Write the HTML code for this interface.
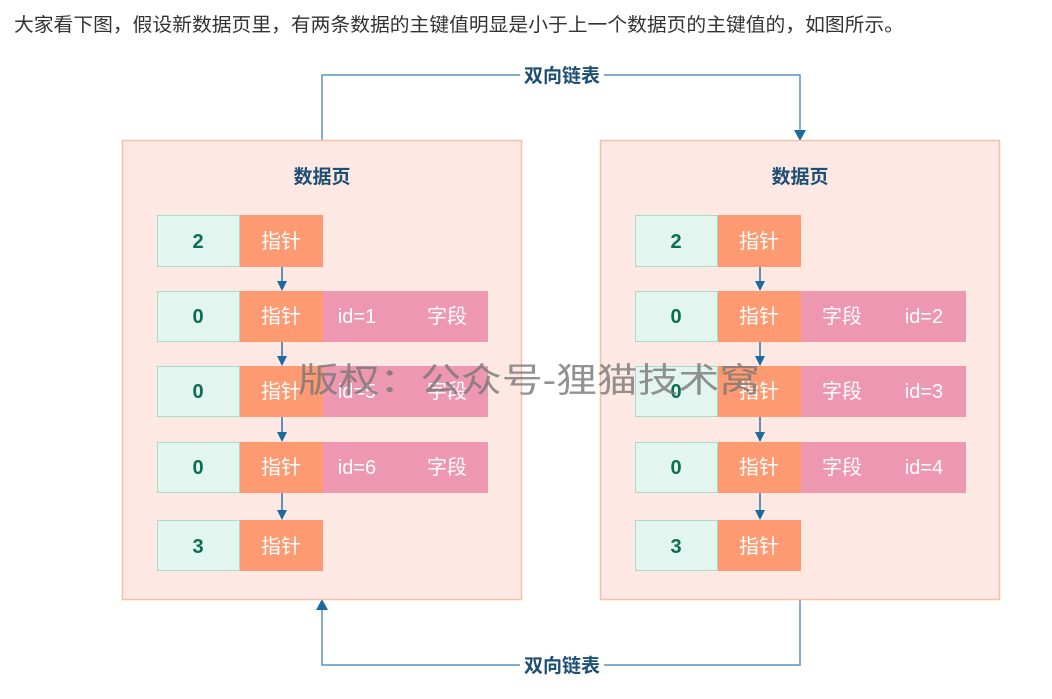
<!DOCTYPE html>
<html><head><meta charset="utf-8"><style>
html,body{margin:0;padding:0;background:#fff;width:1052px;height:699px;overflow:hidden}
svg{position:absolute;left:0;top:0}
text{font-family:"Liberation Sans","Noto Sans CJK SC",sans-serif}
</style></head><body>
<svg width="1052" height="699" viewBox="0 0 1052 699" xmlns="http://www.w3.org/2000/svg">
<text x="14" y="31" font-size="19" fill="#333" textLength="890" lengthAdjust="spacingAndGlyphs">大家看下图，假设新数据页里，有两条数据的主键值明显是小于上一个数据页的主键值的，如图所示。</text>
<g fill="none" stroke="#5b93b5" stroke-width="1.5">
<path d="M322 140 V75 H800 V132"/>
<path d="M800 600 V665 H322 V608"/>
</g>
<path d="M794 130 L800 141 L806 130Z" fill="#1d6a9e"/>
<path d="M316 610 L322 599 L328 610Z" fill="#1d6a9e"/>
<rect x="520" y="63" width="84" height="24" fill="#fff"/>
<rect x="520" y="653" width="84" height="24" fill="#fff"/>
<text x="562" y="82" font-size="19" font-weight="bold" fill="#1d4f73" text-anchor="middle">双向链表</text>
<text x="562" y="672" font-size="19" font-weight="bold" fill="#1d4f73" text-anchor="middle">双向链表</text>
<rect x="122.5" y="140.5" width="399" height="459" fill="#fde8e3" stroke="#f5c0a8" stroke-width="1.5"/>
<rect x="600.5" y="140.5" width="399" height="459" fill="#fde8e3" stroke="#f5c0a8" stroke-width="1.5"/>
<text x="322" y="183" font-size="19" font-weight="bold" fill="#1d4f73" text-anchor="middle">数据页</text>
<text x="800" y="183" font-size="19" font-weight="bold" fill="#1d4f73" text-anchor="middle">数据页</text>
<g font-size="20" text-anchor="middle">
<g>
<rect x="157.5" y="215.5" width="82" height="51" fill="#e3f5ef" stroke="#a8dcc8"/><rect x="240" y="215" width="83" height="52" fill="#fd9a72"/>
<text x="198" y="248" fill="#0b6e52" font-weight="bold">2</text><text x="281" y="248" fill="#fff">指针</text>
<rect x="157.5" y="291.5" width="82" height="50" fill="#e3f5ef" stroke="#a8dcc8"/><rect x="240" y="291" width="83" height="51" fill="#fd9a72"/><rect x="323" y="291" width="165" height="51" fill="#ee97b0"/>
<text x="198" y="323" fill="#0b6e52" font-weight="bold">0</text><text x="281" y="323" fill="#fff">指针</text><text x="357" y="323" fill="#fff">id=1</text><text x="447" y="323" fill="#fff">字段</text>
<rect x="157.5" y="366.5" width="82" height="50" fill="#e3f5ef" stroke="#a8dcc8"/><rect x="240" y="366" width="83" height="51" fill="#fd9a72"/><rect x="323" y="366" width="165" height="51" fill="#ee97b0"/>
<text x="198" y="398" fill="#0b6e52" font-weight="bold">0</text><text x="281" y="398" fill="#fff">指针</text><text x="357" y="398" fill="#fff">id=5</text><text x="447" y="398" fill="#fff">字段</text>
<rect x="157.5" y="442.5" width="82" height="50" fill="#e3f5ef" stroke="#a8dcc8"/><rect x="240" y="442" width="83" height="51" fill="#fd9a72"/><rect x="323" y="442" width="165" height="51" fill="#ee97b0"/>
<text x="198" y="474" fill="#0b6e52" font-weight="bold">0</text><text x="281" y="474" fill="#fff">指针</text><text x="357" y="474" fill="#fff">id=6</text><text x="447" y="474" fill="#fff">字段</text>
<rect x="157.5" y="520.5" width="82" height="50" fill="#e3f5ef" stroke="#a8dcc8"/><rect x="240" y="520" width="83" height="51" fill="#fd9a72"/>
<text x="198" y="553" fill="#0b6e52" font-weight="bold">3</text><text x="281" y="553" fill="#fff">指针</text>
</g>
<g>
<rect x="635.5" y="215.5" width="82" height="51" fill="#e3f5ef" stroke="#a8dcc8"/><rect x="718" y="215" width="83" height="52" fill="#fd9a72"/>
<text x="676" y="248" fill="#0b6e52" font-weight="bold">2</text><text x="759" y="248" fill="#fff">指针</text>
<rect x="635.5" y="291.5" width="82" height="50" fill="#e3f5ef" stroke="#a8dcc8"/><rect x="718" y="291" width="83" height="51" fill="#fd9a72"/><rect x="801" y="291" width="165" height="51" fill="#ee97b0"/>
<text x="676" y="323" fill="#0b6e52" font-weight="bold">0</text><text x="759" y="323" fill="#fff">指针</text><text x="842" y="323" fill="#fff">字段</text><text x="924" y="323" fill="#fff">id=2</text>
<rect x="635.5" y="366.5" width="82" height="50" fill="#e3f5ef" stroke="#a8dcc8"/><rect x="718" y="366" width="83" height="51" fill="#fd9a72"/><rect x="801" y="366" width="165" height="51" fill="#ee97b0"/>
<text x="676" y="398" fill="#0b6e52" font-weight="bold">0</text><text x="759" y="398" fill="#fff">指针</text><text x="842" y="398" fill="#fff">字段</text><text x="924" y="398" fill="#fff">id=3</text>
<rect x="635.5" y="442.5" width="82" height="50" fill="#e3f5ef" stroke="#a8dcc8"/><rect x="718" y="442" width="83" height="51" fill="#fd9a72"/><rect x="801" y="442" width="165" height="51" fill="#ee97b0"/>
<text x="676" y="474" fill="#0b6e52" font-weight="bold">0</text><text x="759" y="474" fill="#fff">指针</text><text x="842" y="474" fill="#fff">字段</text><text x="924" y="474" fill="#fff">id=4</text>
<rect x="635.5" y="520.5" width="82" height="50" fill="#e3f5ef" stroke="#a8dcc8"/><rect x="718" y="520" width="83" height="51" fill="#fd9a72"/>
<text x="676" y="553" fill="#0b6e52" font-weight="bold">3</text><text x="759" y="553" fill="#fff">指针</text>
</g>
</g>
<g stroke="#2a74a8" stroke-width="1.5">
<path d="M282 267 V283 M282 342 V358 M282 417 V434 M282 493 V512 M760 267 V283 M760 342 V358 M760 417 V434 M760 493 V512"/>
</g>
<g fill="#1d6a9e">
<path d="M277 281 L282 291 L287 281Z M277 356 L282 366 L287 356Z M277 432 L282 442 L287 432Z M277 510 L282 520 L287 510Z"/>
<path d="M755 281 L760 291 L765 281Z M755 356 L760 366 L765 356Z M755 432 L760 442 L765 432Z M755 510 L760 520 L765 510Z"/>
</g>
<text x="298" y="392" font-size="34" fill="#777" fill-opacity="0.8" textLength="462" lengthAdjust="spacingAndGlyphs">版权：公众号-狸猫技术窝</text>
</svg>
</body></html>
